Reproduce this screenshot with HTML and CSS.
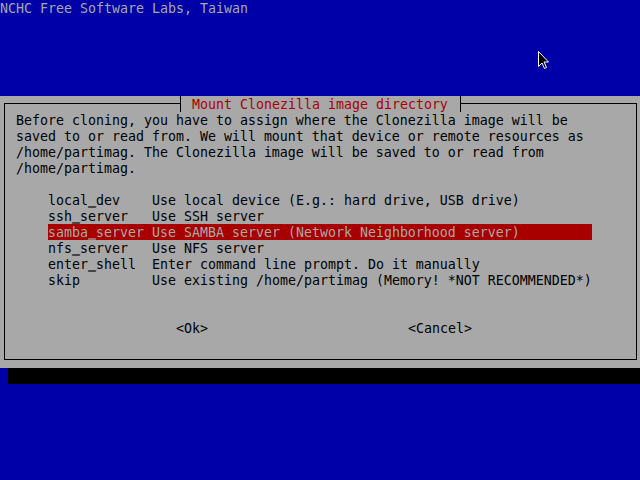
FILE: index.html
```html
<!DOCTYPE html>
<html>
<head>
<meta charset="utf-8">
<link rel="stylesheet" href="styles.css">
</head>
<body>
<div class="screen">
  <div class="header">NCHC Free Software Labs, Taiwan</div>
  <div class="dialog">
    <div class="top">
      <div class="seg seg-l"></div>
      <div class="title">
        <svg class="tee" width="8" height="16" viewBox="0 0 8 16"><path d="M0 7.5H4.5M4.5 0V16" stroke="#000" stroke-width="1" fill="none"/></svg><span class="title-text"> Mount Clonezilla image directory </span><svg class="tee" width="8" height="16" viewBox="0 0 8 16"><path d="M4.5 0V16M4.5 7.5H8" stroke="#000" stroke-width="1" fill="none"/></svg>
      </div>
      <div class="seg seg-r"></div>
    </div>
    <div class="frame">
      <div class="text">Before cloning, you have to assign where the Clonezilla image will be
saved to or read from. We will mount that device or remote resources as
/home/partimag. The Clonezilla image will be saved to or read from
/home/partimag.</div>
      <div class="menu">
        <div class="item"><span class="tag">local<span class="us">_</span>dev</span><span class="desc">Use local device (E.g.: hard drive, USB drive)</span></div>
        <div class="item"><span class="tag">ssh<span class="us">_</span>server</span><span class="desc">Use SSH server</span></div>
        <div class="item selected"><span class="tag">samba<span class="us">_</span>server</span><span class="desc">Use SAMBA server (Network Neighborhood server)</span></div>
        <div class="item"><span class="tag">nfs<span class="us">_</span>server</span><span class="desc">Use NFS server</span></div>
        <div class="item"><span class="tag">enter<span class="us">_</span>shell</span><span class="desc">Enter command line prompt. Do it manually</span></div>
        <div class="item"><span class="tag">skip</span><span class="desc">Use existing /home/partimag (Memory! *NOT RECOMMENDED*)</span></div>
      </div>
      <div class="buttons">
        <span class="btn">&lt;Ok&gt;</span>
        <span class="btn">&lt;Cancel&gt;</span>
      </div>
    </div>
  </div>
  <div class="shadow"></div>
  <svg class="cursor" width="12" height="19" viewBox="0 0 12 19"><path d="M0.5 0.5V15.5L4 12L6.5 17.5L8.5 16.5L6 11H10.5Z" fill="#000" stroke="#fff" stroke-width="1" stroke-linejoin="miter"/></svg>
</div>
</body>
</html>
```
FILE: styles.css
```css
html, body {
  margin: 0;
  padding: 0;
  background: #0000a8;
}
.screen {
  position: relative;
  width: 640px;
  height: 480px;
  overflow: hidden;
  background: #0000a8;
  font-family: "DejaVu Sans Mono", monospace;
  font-size: 13.29px;
  line-height: 16px;
  display: flex;
  flex-direction: column;
}
.header {
  height: 16px;
  box-sizing: border-box;
  padding-top: 1px;
  color: #a8a8a8;
  white-space: pre;
}
.dialog {
  margin-top: 80px;
  height: 272px;
  box-sizing: border-box;
  background: #a8a8a8;
  padding: 0 3px 8px 4px;
  display: flex;
  flex-direction: column;
  color: #000;
}
.top {
  display: flex;
  height: 16px;
  flex: none;
}
.seg {
  margin-top: 7px;
  height: 9px;
  border-top: 1px solid #000;
  box-sizing: border-box;
}
.seg-l {
  width: 172px;
  border-left: 1px solid #000;
}
.seg-r {
  flex: 1;
  border-right: 1px solid #000;
}
.title {
  display: flex;
  height: 16px;
}
.tee {
  display: block;
  flex: none;
}
.title-text {
  color: #a80000;
  white-space: pre;
  height: 16px;
  box-sizing: border-box;
  padding-top: 1px;
}
.frame {
  flex: 1;
  border-left: 1px solid #000;
  border-right: 1px solid #000;
  border-bottom: 1px solid #000;
  padding-left: 11px;
  display: flex;
  flex-direction: column;
}
.text {
  white-space: pre;
  padding-top: 1px;
}
.menu {
  margin-top: 15px;
  padding-left: 32px;
  display: flex;
  flex-direction: column;
}
.item {
  display: flex;
  width: 544px;
  height: 16px;
  box-sizing: border-box;
  padding-top: 1px;
  white-space: pre;
}
.tag {
  width: 104px;
  flex: none;
}
.us {
  line-height: 0;
  vertical-align: 2px;
  text-shadow: 0 0.6px 0 currentColor;
}
.item.selected {
  background: #a80000;
  color: #a8a8a8;
}
.buttons {
  margin-top: 33px;
  padding-left: 160px;
  display: flex;
  gap: 200px;
}
.btn {
  white-space: pre;
}
.shadow {
  margin-left: 8px;
  height: 16px;
  background: #000;
}
.cursor {
  position: absolute;
  left: 538px;
  top: 51px;
}
```
